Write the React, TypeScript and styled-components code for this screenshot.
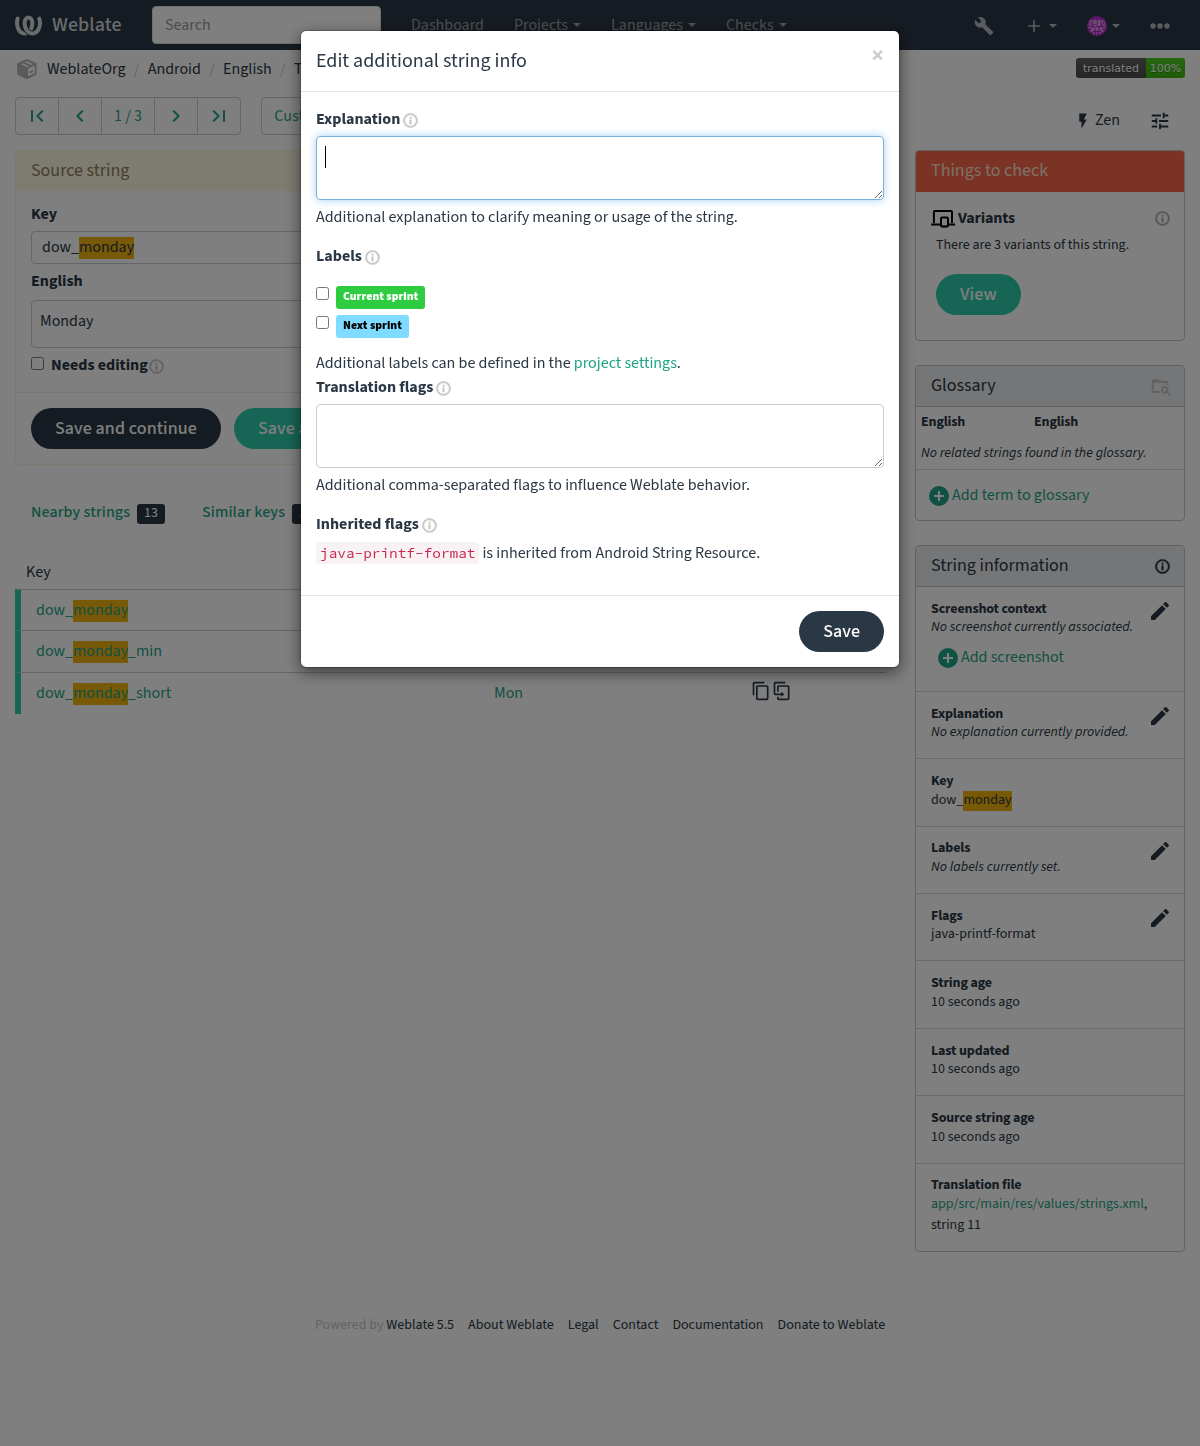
import React from "react";
import styled, { createGlobalStyle, css } from "styled-components";
import { SiWeblate } from "react-icons/si";

const sans = `"Source Sans 3", "Source Sans Pro", "Noto Sans CJK SC", "Noto Sans", sans-serif`;
const mono = `"Source Code Pro", "Noto Sans Mono CJK SC", "DejaVu Sans Mono", monospace`;

const color = {
  text: "#2a3744",
  link: "#1fa385",
  green: "#2eccaa",
  dark: "#2a3744",
  line: "#cccccc",
};

const Global = createGlobalStyle`
  *, *::before, *::after { box-sizing: border-box; }
  body { margin: 0; background: #fff; color: ${color.text}; font: 16px/24px ${sans}; }
  a { color: inherit; text-decoration: none; }
  button { font-family: inherit; }
`;

/* ---------- icons ---------- */

const paths = {
  pencil:
    "M20.71,7.04C21.1,6.65 21.1,6 20.71,5.63L18.37,3.29C18,2.9 17.35,2.9 16.96,3.29L15.12,5.12L18.87,8.87M3,17.25V21H6.75L17.81,9.93L14.06,6.18L3,17.25Z",
  info: "M11,9H13V7H11M12,20C7.59,20 4,16.41 4,12C4,7.59 7.59,4 12,4C16.41,4 20,7.59 20,12C20,16.41 16.41,20 12,20M12,2A10,10 0 0,0 2,12A10,10 0 0,0 12,22A10,10 0 0,0 22,12A10,10 0 0,0 12,2M11,17H13V11H11V17Z",
  tune: "M3 17v2h6v-2H3zM3 5v2h10V5H3zm10 16v-2h8v-2h-8v-2h-2v6h2zM7 9v2H3v2h4v2h2V9H7zm14 4v-2H11v2h10zm-6-4h2V7h4V5h-4V3h-2v6z",
  flash: "M7,2V13H10V22L17,10H13L17,2H7Z",
  first:
    "M18.41,16.59L13.82,12L18.41,7.41L17,6L11,12L17,18L18.41,16.59M6,6H8V18H6V6Z",
  prev: "M15.41,16.58L10.83,12L15.41,7.41L14,6L8,12L14,18L15.41,16.58Z",
  next: "M8.59,16.58L13.17,12L8.59,7.41L10,6L16,12L10,18L8.59,16.58Z",
  last: "M5.59,7.41L10.18,12L5.59,16.59L7,18L13,12L7,6L5.59,7.41M16,6H18V18H16V6Z",
  plus: "M19,13H13V19H11V13H5V11H11V5H13V11H19V13Z",
  copy: "M19,21H8V7H19M19,5H8A2,2 0 0,0 6,7V21A2,2 0 0,0 8,23H19A2,2 0 0,0 21,21V7A2,2 0 0,0 19,5M16,1H4A2,2 0 0,0 2,3V17H4V3H16V1Z",
  clone:
    "M11,17H4A2,2 0 0,1 2,15V3A2,2 0 0,1 4,1H16V3H4V15H11V13L15,16L11,19V17M19,21V7H8V13H6V7A2,2 0 0,1 8,5H19A2,2 0 0,1 21,7V21A2,2 0 0,1 19,23H8A2,2 0 0,1 6,21V19H8V21H19Z",
  wrench:
    "M22.7,19L13.6,9.9C14.5,7.6 14,4.9 12.1,3C10.1,1 7.1,0.6 4.7,1.7L9,6L6,9L1.6,4.7C0.4,7.1 0.9,10.1 2.9,12.1C4.8,14 7.5,14.5 9.8,13.6L18.9,22.7C19.3,23.1 19.9,23.1 20.3,22.7L22.6,20.4C23.1,20 23.1,19.3 22.7,19Z",
  folderSearch:
    "M16.5,12C19,12 21,14 21,16.5C21,17.38 20.75,18.21 20.31,18.9L23.39,22L22,23.39L18.88,20.32C18.19,20.75 17.37,21 16.5,21C14,21 12,19 12,16.5C12,14 14,12 16.5,12M16.5,14A2.5,2.5 0 0,0 14,16.5A2.5,2.5 0 0,0 16.5,19A2.5,2.5 0 0,0 19,16.5A2.5,2.5 0 0,0 16.5,14M9,4L11,6H19A2,2 0 0,1 21,8V11.81C20.42,11.26 19.75,10.81 19,10.46V8H3V18H10.17C10.34,18.72 10.63,19.39 11,20H3C1.89,20 1,19.1 1,18V6C1,4.89 1.89,4 3,4H9Z",
  plusCircle:
    "M17,13H13V17H11V13H7V11H11V7H13V11H17M12,2A10,10 0 0,0 2,12A10,10 0 0,0 12,22A10,10 0 0,0 22,12A10,10 0 0,0 12,2Z",
};

const IconSvg = styled.svg<{ $c?: string }>`
  display: block;
  flex: none;
  fill: ${(p) => p.$c ?? "currentColor"};
`;

function Icon({ name, size, tint, className }: { name: keyof typeof paths; size: number; tint?: string; className?: string }) {
  return (
    <IconSvg
      className={className}
      viewBox="0 0 24 24"
      width={size}
      height={size}
      $c={tint}
      stroke={name === "info" ? tint ?? "currentColor" : "none"}
      strokeWidth="0.9"
    >
      <path d={paths[name]} />
    </IconSvg>
  );
}

const HelpIcon = styled(Icon).attrs({ name: "info" as const, size: 17, tint: "#c8c8c8" })`
  margin: 2px 0 0 0;
`;

const BoxIcon = () => (
  <IconSvg viewBox="0 0 20 20" width={20} height={20} $c="none" stroke="#b5b5b5" strokeWidth="2" strokeLinejoin="round">
    <path d="M10 1 18.6 5V15L10 19 1.4 15V5Z" />
    <path d="M1.4 5 10 9.2V19L1.4 15Z" fill="#b5b5b5" />
    <path d="M10 9.2 18.6 5M5.4 3.2 14 7.2" />
    <path d="M12.6 13.6 16 12" />
  </IconSvg>
);

const VariantsIcon = () => (
  <IconSvg viewBox="0 0 24 19" width={24} height={19} $c="none" stroke="#000" strokeWidth="2">
    <path d="M2.9 14V3Q2.9 2 3.9 2H20Q21 2 21 3V14" />
    <path d="M0 15.6H10M17 15.6H24" />
    <rect x="10" y="8.4" width="7" height="9" rx="1" />
    <path d="M11.5 17.5H15.8" strokeDasharray="1 0.8" />
  </IconSvg>
);

const Identicon = () => (
  <IconSvg viewBox="0 0 20 20" width={20} height={20} $c="#b72fd0">
    <circle cx="10" cy="10" r="10" />
    <g stroke="#e3c3ea" strokeWidth="1" fill="none">
      <path d="M2.5 5H6M14 5H17.5M1.5 9H5M15 9H18.5M1.5 11.5H4M16 11.5H18.5M3 15H6M14 15H17" />
      <path d="M7 4.5H9V7H7ZM11 4.5H13V7H11ZM7 8.5V10H9V8.5M11 10V8.5H13V10" />
      <path d="M5 12H7V14H5ZM9 12H11V14H9ZM13 12H15V14H13Z" />
      <path d="M7 16V18M10 16V19.5M13 16V18M2 7H18" strokeDasharray="2 1" />
    </g>
  </IconSvg>
);

const Dots = () => (
  <IconSvg viewBox="0 0 20 6" width={20} height={6}>
    <circle cx="3" cy="3" r="2.7" />
    <circle cx="10" cy="3" r="2.7" />
    <circle cx="17" cy="3" r="2.7" />
  </IconSvg>
);

const Caret = styled.span`
  display: inline-block;
  border: 4px solid transparent;
  border-top-color: currentColor;
  border-bottom: 0;
`;

/* ---------- shared parts ---------- */

const Strong = styled.b<{ $small?: boolean; $tight?: boolean }>`
  font-weight: 700;
  font-size: ${(p) => (p.$small ? 14 : 16)}px;
  letter-spacing: ${(p) => (p.$small || p.$tight ? "-0.15px" : "0")};
`;

const Mark = styled.mark`
  display: inline-block;
  height: 22px;
  line-height: 21px;
  color: inherit;
  background: #eeb211;
`;

const Pill = styled.button<{ $kind?: "dark" | "green" }>`
  height: 41px;
  padding: 0 24px;
  border: 0;
  border-radius: 21px;
  color: #fff;
  font-size: 18px;
  font-weight: 500;
  letter-spacing: 0.1px;
  line-height: 39px;
  white-space: nowrap;
  background: ${(p) => (p.$kind === "green" ? color.green : color.dark)};
`;

const CheckBox = styled.input.attrs({ type: "checkbox" })`
  width: 13px;
  height: 13px;
  margin: 0;
  flex: none;
`;

/* ---------- page ---------- */

const Page = styled.div`
  height: 1446px;
  overflow: hidden;
  display: flex;
  flex-direction: column;
`;

const Nav = styled.nav`
  height: 50px;
  flex: none;
  display: flex;
  align-items: center;
  padding: 0 15px;
  background: ${color.dark};
  color: #b4b9be;
`;

const Brand = styled.a`
  width: 137px;
  display: flex;
  align-items: center;
  gap: 10px;
  font-size: 20px;
  font-weight: 500;
  letter-spacing: 0.1px;
  color: #d3d7da;
`;

const Search = styled.input`
  width: 229px;
  height: 38px;
  border: 1px solid #ddd;
  border-radius: 4px;
  padding: 0 12px;
  background: #fff;
  font: 16px ${sans};
  &::placeholder { color: #9a9a9a; }
`;

const NavLinks = styled.div`
  display: flex;
  gap: 30px;
  margin-left: 30px;
  flex: 1;
`;

const NavLink = styled.a`
  display: flex;
  align-items: center;
  gap: 5px;
  color: #9aa0a6;
`;

const NavTools = styled.div`
  display: flex;
  align-items: center;
  gap: 30px;
  padding: 2px 15px 0 0;
`;

const NavTool = styled.a`
  display: flex;
  align-items: center;
  gap: 5px;
`;

const Crumbs = styled.div`
  height: 37px;
  flex: none;
  display: flex;
  align-items: center;
  padding: 1px 15px 0 17px;
`;

const Crumb = styled.a`
  & + &::before {
    content: "/";
    margin: 0 8.3px;
    color: #ccc;
  }
`;

const CrumbList = styled.div`
  flex: 1;
  display: flex;
  margin-left: 10px;
`;

const Badge = styled.span`
  display: flex;
  height: 20px;
  margin-top: -2px;
  border-radius: 3px;
  overflow: hidden;
  color: #fff;
  font: 11px/21px "DejaVu Sans", sans-serif;
  text-shadow: 0 1px 0 rgba(1, 1, 1, 0.3);
`;

const BadgePart = styled.span<{ $bg: string; $w: number }>`
  width: ${(p) => p.$w}px;
  text-align: center;
  background: linear-gradient(rgba(187, 187, 187, 0.1), rgba(0, 0, 0, 0.1)), ${(p) => p.$bg};
`;

const Toolbar = styled.div`
  height: 38px;
  flex: none;
  display: flex;
  align-items: center;
  gap: 20px;
  margin: 10px 15px 15px;
  color: ${color.link};
`;

const Group = styled.div`
  display: flex;
  height: 38px;
  border: 1px solid ${color.line};
  border-radius: 4px;
`;

const GroupItem = styled.a<{ $w: number }>`
  width: ${(p) => p.$w}px;
  display: flex;
  align-items: center;
  justify-content: center;
  & + & { border-left: 1px solid ${color.line}; }
`;

const ToolLinks = styled.div`
  margin-left: auto;
  display: flex;
  align-items: center;
  padding: 9px 14px 0 0;
  color: ${color.text};
`;

const ZenLink = styled.a`
  display: flex;
  align-items: center;
  gap: 3px;
  margin: -2px 29px 0 0;
  svg { margin-top: 2px; }
`;

const Columns = styled.main`
  display: grid;
  grid-template-columns: 870px 270px;
  gap: 30px;
  padding: 0 15px;
  flex: none;
  align-items: start;
  height: 1152px;
`;

const SourcePanel = styled.section`
  height: 315px;
  border: 1px solid #faf2dc;
  border-radius: 4px;
`;

const SourceHead = styled.header`
  height: 40px;
  padding: 0 15px;
  font-size: 18px;
  line-height: 39px;
  color: #8a7d5b;
  background: #fcf8e3;
`;

const SourceBody = styled.div`
  height: 201px;
  padding: 11px 15px 0;
  display: flex;
  flex-direction: column;
`;

const FieldBox = styled.div<{ $h: number; $mt: number; $mb: number; $pl: number; $lh: number }>`
  height: ${(p) => p.$h}px;
  margin: ${(p) => p.$mt}px 0 ${(p) => p.$mb}px;
  padding-left: ${(p) => p.$pl}px;
  line-height: ${(p) => p.$lh}px;
  border: 1px solid ${color.line};
  border-radius: 4px;
`;

const CheckLine = styled.label`
  display: flex;
  align-items: center;
  gap: 1px;
  ${CheckBox} { margin: 0 6px 3px 0; }
  svg { margin-left: -1px; }
`;

const SourceFoot = styled.footer`
  display: flex;
  gap: 13px;
  padding: 15px;
  border-top: 1px solid #e8e8e8;
`;

const Tabs = styled.div`
  display: flex;
  gap: 37px;
  margin-top: 35px;
  padding-left: 16px;
  color: ${color.link};
  font-weight: 500;
  letter-spacing: 0.1px;
`;

const Tab = styled.a`
  display: flex;
  align-items: center;
  gap: 7px;
`;

const Count = styled.span`
  width: 28px;
  height: 20px;
  border-radius: 3px;
  margin-top: 3px;
  text-align: center;
  color: #fff;
  font-size: 14px;
  line-height: 18px;
  font-weight: 400;
  background: ${color.dark};
`;

const Table = styled.div`
  margin-top: 36px;
`;

const TableHead = styled.div`
  height: 29px;
  padding-left: 11px;
`;

const Row = styled.div`
  height: 41.4px;
  display: grid;
  grid-template-columns: 458px 256.5px 1fr;
  border-left: 6px solid ${color.green};
  border-top: 1px solid ${color.line};
  padding-left: 15px;
  line-height: 40px;
  color: ${color.link};
  &:last-child { height: 42px; }
`;

const RowTools = styled.span`
  display: flex;
  gap: 1px;
  padding-top: 8px;
  color: ${color.text};
`;

const Side = styled.aside`
  display: flex;
  flex-direction: column;
  gap: 24px;
`;

const Panel = styled.section<{ $h: number }>`
  height: ${(p) => p.$h}px;
  border: 1px solid #c4c4c4;
  border-radius: 4px;
  overflow: hidden;
  font-size: 14px;
`;

const PanelHead = styled.header<{ $danger?: boolean }>`
  display: flex;
  align-items: center;
  justify-content: space-between;
  height: 41px;
  padding: 0 13.5px 0 15px;
  font-size: 18px;
  line-height: 36px;
  border-bottom: 1px solid #c4c4c4;
  background: #eaecef;
  ${(p) =>
    p.$danger &&
    css`
      color: #fce0cc;
      background: #f6664c;
      border-bottom-color: #f6664c;
    `}
`;

const HeadText = styled.span`
  margin-top: -1px;
`;

const CheckItem = styled.div`
  display: flex;
  flex-direction: column;
  align-items: flex-start;
  padding: 14px 13.5px 0 16px;
`;

const CheckTitle = styled.div`
  display: flex;
  align-self: stretch;
  align-items: center;
  gap: 3px;
  margin-left: -1px;
  svg:first-child { margin-top: 1px; }
  svg:last-child { margin-left: auto; }
`;

const CheckText = styled.p`
  margin: 3px 0 17px 4px;
`;

const CheckAction = styled.div`
  padding-left: 4px;
`;

const GlossHead = styled.div`
  display: grid;
  grid-template-columns: 113px 1fr;
  padding: 3px 5px 0;
`;

const GlossEmpty = styled.div`
  height: 36px;
  padding: 7px 5px 0;
  border-bottom: 1px solid #dcdcdc;
  font-style: italic;
`;

const AddLink = styled.a<{ $pad: string }>`
  display: flex;
  gap: 1px;
  padding: ${(p) => p.$pad};
  font-size: 16px;
  line-height: 25px;
  color: ${color.link};
  svg { margin-top: 1px; }
`;

const InfoItem = styled.div<{ $h: number }>`
  height: ${(p) => p.$h}px;
  display: flex;
  align-items: flex-start;
  justify-content: space-between;
  padding: 12.8px 12px 0 15px;
  line-height: 18.5px;
  & + & { border-top: 1px solid #d4d4d4; }
  > svg { margin-top: -0.8px; }
`;

const Value = styled.div<{ $italic?: boolean }>`
  font-style: ${(p) => (p.$italic ? "italic" : "normal")};
  ${Mark} { height: 20px; line-height: 18px; }
`;

const Extra = styled.div`
  padding-top: 1px;
  line-height: 22px;
`;

const Footer = styled.footer`
  display: flex;
  justify-content: center;
  gap: 14px;
  margin-top: 11px;
  font-size: 14px;
`;

const Powered = styled.span`
  color: #c8c8c8;
  a { color: ${color.text}; }
`;

/* ---------- dialog ---------- */

const Backdrop = styled.div`
  position: fixed;
  inset: 0;
  display: flex;
  justify-content: center;
  align-items: flex-start;
  padding-top: 30px;
  background: rgba(0, 0, 0, 0.5);
`;

const Dialog = styled.div`
  width: 600px;
  border: 1px solid rgba(0, 0, 0, 0.2);
  border-radius: 6px;
  background: #fff;
  background-clip: padding-box;
  box-shadow: 0 5px 15px rgba(0, 0, 0, 0.5);
`;

const DialogHead = styled.header`
  height: 61px;
  display: flex;
  justify-content: space-between;
  align-items: flex-start;
  padding: 0 15px;
  border-bottom: 1px solid #e5e5e5;
  font-size: 20px;
  line-height: 60px;
`;

const Close = styled.button`
  border: 0;
  padding: 0;
  background: none;
  color: #ccc;
  font: 700 24px/50px ${sans};
`;

const DialogBody = styled.div`
  display: flex;
  flex-direction: column;
  padding: 15px 15px 30px;
`;

const LabelRow = styled.div`
  height: 24px;
  display: flex;
  align-items: center;
  gap: 2px;
  margin-bottom: 5px;
`;

const Area = styled.div`
  position: relative;
  display: flex;
`;

const TextArea = styled.textarea<{ $focus?: boolean }>`
  width: 568px;
  height: 64px;
  margin: 0;
  border: 1px solid ${color.line};
  border-radius: 4px;
  outline: 0;
  ${(p) =>
    p.$focus &&
    css`
      border-color: #7eb0de;
      box-shadow: 0 0 8px rgba(102, 175, 233, 0.6);
    `}
`;

const TextCursor = styled.span`
  position: absolute;
  left: 9px;
  top: 10px;
  width: 1px;
  height: 22px;
  background: #000;
`;

const Hint = styled.p<{ $mt?: number; $mb?: number }>`
  margin: ${(p) => p.$mt ?? 5}px 0 ${(p) => p.$mb ?? 15}px;
  a { color: ${color.link}; }
`;

const LabelOptions = styled.div`
  padding-top: 10px;
`;

const LabelOption = styled.label`
  height: 29px;
  display: flex;
  align-items: flex-start;
  gap: 7px;
  padding-top: 3px;
  ${CheckBox} { margin-top: 1px; }
`;

const LabelTag = styled.span<{ $bg: string; $fg: string }>`
  height: 23px;
  padding: 0 7px;
  border-radius: 3px;
  font-size: 11.75px;
  font-weight: 900;
  line-height: 22px;
  color: ${(p) => p.$fg};
  background: ${(p) => p.$bg};
`;

const Code = styled.code`
  display: inline-block;
  height: 22px;
  margin-right: 3px;
  padding: 0 4px;
  border-radius: 4px;
  font: 14.4px/22px ${mono};
  color: #c7254e;
  background: #f9f2f4;
`;

const DialogFoot = styled.footer`
  display: flex;
  justify-content: flex-end;
  padding: 15px;
  border-top: 1px solid #e5e5e5;
`;

/* ---------- data ---------- */

const rows = [
  { tail: "", text: "Monday" },
  { tail: "_min", text: "M" },
  { tail: "_short", text: "Mon" },
];

const details: {
  title: string;
  height: number;
  value: React.ReactNode;
  italic?: boolean;
  edit?: boolean;
  extra?: React.ReactNode;
}[] = [
  {
    title: "Screenshot context",
    height: 103.9,
    value: "No screenshot currently associated.",
    italic: true,
    edit: true,
    extra: (
      <AddLink href="#" $pad="8px 0 0 5px">
        <Icon name="plusCircle" size={24} />
        Add screenshot
      </AddLink>
    ),
  },
  { title: "Explanation", height: 67.4, value: "No explanation currently provided.", italic: true, edit: true },
  { title: "Key", height: 67.4, value: <>dow_<Mark>monday</Mark></> },
  { title: "Labels", height: 67.4, value: "No labels currently set.", italic: true, edit: true },
  { title: "Flags", height: 67.4, value: "java-printf-format", edit: true },
  { title: "String age", height: 67.4, value: "10 seconds ago" },
  { title: "Last updated", height: 67.4, value: "10 seconds ago" },
  { title: "Source string age", height: 67.4, value: "10 seconds ago" },
  {
    title: "Translation file",
    height: 88,
    value: <><LinkText>app/src/main/res/values/strings.xml</LinkText>,</>,
    extra: <Extra>string 11</Extra>,
  },
];

function LinkText({ children }: { children: React.ReactNode }) {
  return <Accent href="#">{children}</Accent>;
}

const Accent = styled.a`
  && { color: ${color.link}; }
`;

const footerLinks = ["About Weblate", "Legal", "Contact", "Documentation", "Donate to Weblate"];

function FieldLabel({ children }: { children: React.ReactNode }) {
  return (
    <LabelRow>
      <Strong>{children}</Strong>
      <HelpIcon />
    </LabelRow>
  );
}

export default function App() {
  return (
    <>
      <Global />
      <Page>
        <Nav>
          <Brand href="#">
            <SiWeblate size={27} />
            Weblate
          </Brand>
          <Search placeholder="Search" />
          <NavLinks>
            <NavLink href="#">Dashboard</NavLink>
            <NavLink href="#">Projects <Caret /></NavLink>
            <NavLink href="#">Languages <Caret /></NavLink>
            <NavLink href="#">Checks <Caret /></NavLink>
          </NavLinks>
          <NavTools>
            <NavTool><Icon name="wrench" size={20} /></NavTool>
            <NavTool><Icon name="plus" size={20} /><Caret /></NavTool>
            <NavTool><Identicon /><Caret /></NavTool>
            <NavTool><Dots /></NavTool>
          </NavTools>
        </Nav>

        <Crumbs>
          <BoxIcon />
          <CrumbList>
            {["WeblateOrg", "Android", "English", "Translate"].map((c) => (
              <Crumb key={c} href="#">{c}</Crumb>
            ))}
          </CrumbList>
          <Badge>
            <BadgePart $bg="#555" $w={70}>translated</BadgePart>
            <BadgePart $bg="#4c1" $w={39}>100%</BadgePart>
          </Badge>
        </Crumbs>

        <Toolbar>
          <Group>
            <GroupItem $w={42}><Icon name="first" size={24} /></GroupItem>
            <GroupItem $w={43}><Icon name="prev" size={24} /></GroupItem>
            <GroupItem $w={53}>1 / 3</GroupItem>
            <GroupItem $w={43}><Icon name="next" size={24} /></GroupItem>
            <GroupItem $w={43}><Icon name="last" size={24} /></GroupItem>
          </Group>
          <Group>
            <GroupItem $w={123}>Custom search</GroupItem>
          </Group>
          <ToolLinks>
            <ZenLink href="#"><Icon name="flash" size={18} />Zen</ZenLink>
            <Icon name="tune" size={22} />
          </ToolLinks>
        </Toolbar>

        <Columns>
          <div>
            <SourcePanel>
              <SourceHead>Source string</SourceHead>
              <SourceBody>
                <Strong>Key</Strong>
                <FieldBox $h={33} $mt={5} $mb={5} $pl={10} $lh={30}>
                  dow_<Mark>monday</Mark>
                </FieldBox>
                <Strong>English</Strong>
                <FieldBox $h={48} $mt={7} $mb={5} $pl={8} $lh={40}>Monday</FieldBox>
                <CheckLine>
                  <CheckBox />
                  <Strong>Needs editing</Strong>
                  <HelpIcon />
                </CheckLine>
              </SourceBody>
              <SourceFoot>
                <Pill>Save and continue</Pill>
                <Pill $kind="green">Save and stay</Pill>
              </SourceFoot>
            </SourcePanel>

            <Tabs>
              <Tab href="#">Nearby strings <Count>13</Count></Tab>
              <Tab href="#">Similar keys <Count>11</Count></Tab>
            </Tabs>

            <Table>
              <TableHead>Key</TableHead>
              {rows.map((r) => (
                <Row key={r.text}>
                  <span>dow_<Mark>monday</Mark>{r.tail}</span>
                  <span>{r.text}</span>
                  <RowTools>
                    <Icon name="copy" size={20} />
                    <Icon name="clone" size={20} />
                  </RowTools>
                </Row>
              ))}
            </Table>
          </div>

          <Side>
            <Panel $h={191}>
              <PanelHead $danger><HeadText>Things to check</HeadText></PanelHead>
              <CheckItem>
                <CheckTitle>
                  <VariantsIcon />
                  <Strong $tight>Variants</Strong>
                  <Icon name="info" size={17} tint="#b0b0b0" />
                </CheckTitle>
                <CheckText>There are 3 variants of this string.</CheckText>
                <CheckAction><Pill $kind="green">View</Pill></CheckAction>
              </CheckItem>
            </Panel>

            <Panel $h={156}>
              <PanelHead>
                <HeadText>Glossary</HeadText>
                <Icon name="folderSearch" size={20} tint="#c0c0c0" />
              </PanelHead>
              <GlossHead>
                <Strong $small>English</Strong>
                <Strong $small>English</Strong>
              </GlossHead>
              <GlossEmpty>No related strings found in the glossary.</GlossEmpty>
              <AddLink href="#" $pad="13px 0 0 11px">
                <Icon name="plusCircle" size={24} />
                Add term to glossary
              </AddLink>
            </Panel>

            <Panel $h={707}>
              <PanelHead>
                <HeadText>String information</HeadText>
                <Icon name="info" size={17} />
              </PanelHead>
              {details.map((d) => (
                <InfoItem key={d.title} $h={d.height}>
                  <div>
                    <Strong $small>{d.title}</Strong>
                    <Value $italic={d.italic}>{d.value}</Value>
                    {d.extra}
                  </div>
                  {d.edit && <Icon name="pencil" size={24} />}
                </InfoItem>
              ))}
            </Panel>
          </Side>
        </Columns>

        <Footer>
          <Powered>Powered by <a href="#">Weblate 5.5</a></Powered>
          {footerLinks.map((l) => (
            <a key={l} href="#">{l}</a>
          ))}
        </Footer>
      </Page>

      <Backdrop>
        <Dialog role="dialog">
          <DialogHead>
            Edit additional string info
            <Close>×</Close>
          </DialogHead>
          <DialogBody>
            <FieldLabel>Explanation</FieldLabel>
            <Area>
              <TextArea $focus />
              <TextCursor />
            </Area>
            <Hint>Additional explanation to clarify meaning or usage of the string.</Hint>

            <FieldLabel>Labels</FieldLabel>
            <LabelOptions>
              <LabelOption>
                <CheckBox />
                <LabelTag $bg="#2ecc40" $fg="#fff">Current sprint</LabelTag>
              </LabelOption>
              <LabelOption>
                <CheckBox />
                <LabelTag $bg="#7fdbff" $fg="#000">Next sprint</LabelTag>
              </LabelOption>
            </LabelOptions>
            <Hint $mt={10} $mb={0}>
              Additional labels can be defined in the <a href="#">project settings</a>.
            </Hint>

            <FieldLabel>Translation flags</FieldLabel>
            <TextArea />
            <Hint>Additional comma-separated flags to influence Weblate behavior.</Hint>

            <FieldLabel>Inherited flags</FieldLabel>
            <div>
              <Code>java-printf-format</Code>is inherited from Android String Resource.
            </div>
          </DialogBody>
          <DialogFoot>
            <Pill>Save</Pill>
          </DialogFoot>
        </Dialog>
      </Backdrop>
    </>
  );
}
